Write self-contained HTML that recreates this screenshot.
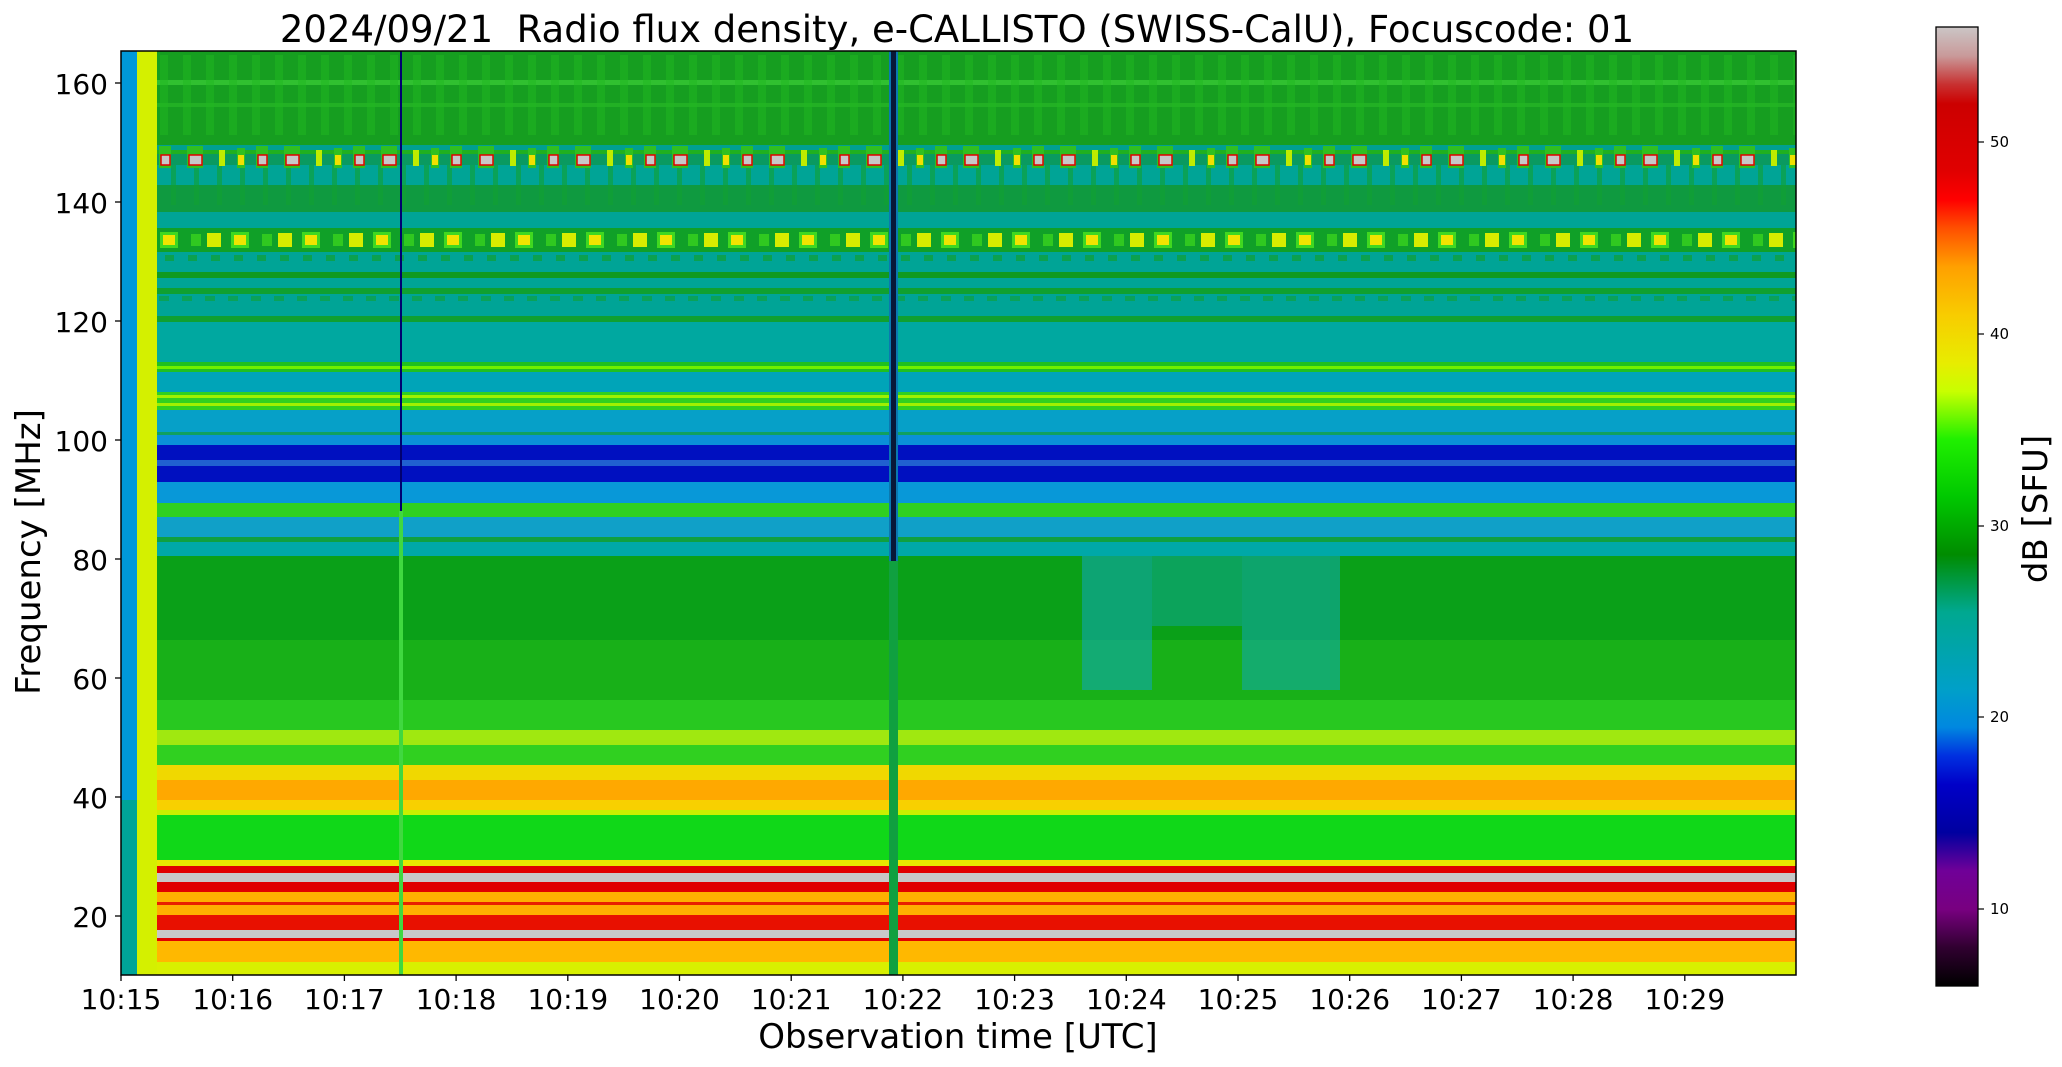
<!DOCTYPE html>
<html><head><meta charset="utf-8"><style>html,body{margin:0;padding:0;background:#fff;}svg{display:block;}</style></head>
<body>
<svg width="2062" height="1067" viewBox="0 0 2062 1067" xmlns="http://www.w3.org/2000/svg" font-family="'DejaVu Sans','Liberation Sans',sans-serif">
<defs>
<linearGradient id="cb" x1="0" y1="27" x2="0" y2="986" gradientUnits="userSpaceOnUse">
<stop offset="0" stop-color="#cbc6c6"/>
<stop offset="0.03" stop-color="#c99a9a"/>
<stop offset="0.06" stop-color="#c83030"/>
<stop offset="0.08" stop-color="#cc0000"/>
<stop offset="0.15" stop-color="#e00000"/>
<stop offset="0.18" stop-color="#ff0000"/>
<stop offset="0.21" stop-color="#ff5000"/>
<stop offset="0.25" stop-color="#ffa000"/>
<stop offset="0.30" stop-color="#f8cc00"/>
<stop offset="0.35" stop-color="#e8ec00"/>
<stop offset="0.38" stop-color="#c8ff00"/>
<stop offset="0.43" stop-color="#20f000"/>
<stop offset="0.49" stop-color="#00c800"/>
<stop offset="0.55" stop-color="#008c00"/>
<stop offset="0.61" stop-color="#00a890"/>
<stop offset="0.69" stop-color="#00a0c8"/>
<stop offset="0.73" stop-color="#0088e0"/>
<stop offset="0.76" stop-color="#0030e0"/>
<stop offset="0.79" stop-color="#0000c8"/>
<stop offset="0.84" stop-color="#0000a0"/>
<stop offset="0.88" stop-color="#700098"/>
<stop offset="0.92" stop-color="#780080"/>
<stop offset="0.96" stop-color="#300030"/>
<stop offset="1" stop-color="#000000"/>
</linearGradient>
<pattern id="rd" x="157" y="0" width="97" height="1067" patternUnits="userSpaceOnUse">
<rect x="2" y="146" width="12" height="22" fill="#30c020"/>
<rect x="4" y="155" width="9" height="10" fill="#c8c8c8" stroke="#e00000" stroke-width="1.5"/>
<rect x="30" y="146" width="16" height="22" fill="#30c020"/>
<rect x="32" y="155" width="13" height="10" fill="#c8c8c8" stroke="#e00000" stroke-width="1.5"/>
<rect x="62" y="150" width="6" height="16" fill="#c0ec00"/>
<rect x="80" y="148" width="8" height="20" fill="#30c020"/>
<rect x="81" y="155" width="6" height="10" fill="#f0e000"/>
</pattern>
<pattern id="yd" x="157" y="0" width="71" height="1067" patternUnits="userSpaceOnUse">
<rect x="3" y="232" width="18" height="16" fill="#40d820"/>
<rect x="6" y="235" width="12" height="10" fill="#f0e400"/>
<rect x="34" y="234" width="10" height="12" fill="#30c820"/>
<rect x="50" y="233" width="14" height="14" fill="#d8ec00"/>
</pattern>
<pattern id="gt" x="157" y="0" width="23" height="1067" patternUnits="userSpaceOnUse">
<rect x="3" y="55" width="8" height="80" fill="#20b820" opacity="0.5"/>
<rect x="14" y="165" width="5" height="40" fill="#10a030" opacity="0.6"/>
<rect x="8" y="255" width="9" height="6" fill="#10a030" opacity="0.7"/>
<rect x="2" y="296" width="10" height="5" fill="#10a030" opacity="0.6"/>
</pattern>
</defs>

<text x="957" y="42" font-size="37" text-anchor="middle" xml:space="preserve" fill="#000">2024/09/21  Radio flux density, e-CALLISTO (SWISS-CalU), Focuscode: 01</text>

<g>
<rect x="157" y="51" width="1639" height="94" fill="#169e20"/>
<rect x="157" y="80" width="1639" height="5" fill="#30c030"/>
<rect x="157" y="103" width="1639" height="4" fill="#22b024"/>
<rect x="157" y="145" width="1639" height="7" fill="#00a090"/>
<rect x="157" y="150" width="1639" height="4" fill="#20b020"/>
<rect x="157" y="154" width="1639" height="11" fill="#0a9a60"/>
<rect x="157" y="165" width="1639" height="20" fill="#00a496"/>
<rect x="157" y="185" width="1639" height="27" fill="#0f9a40"/>
<rect x="157" y="212" width="1639" height="16" fill="#00a496"/>
<rect x="157" y="228" width="1639" height="24" fill="#10a028"/>
<rect x="157" y="252" width="1639" height="20" fill="#00a496"/>
<rect x="157" y="272" width="1639" height="6" fill="#109a20"/>
<rect x="157" y="278" width="1639" height="10" fill="#00a496"/>
<rect x="157" y="288" width="1639" height="6" fill="#10a030"/>
<rect x="157" y="294" width="1639" height="22" fill="#00a496"/>
<rect x="157" y="316" width="1639" height="6" fill="#10a030"/>
<rect x="157" y="322" width="1639" height="40" fill="#00a8a0"/>
<rect x="157" y="362" width="1639" height="10" fill="#20c020"/>
<rect x="157" y="366" width="1639" height="3" fill="#70f000"/>
<rect x="157" y="372" width="1639" height="20" fill="#00a4b8"/>
<rect x="157" y="392" width="1639" height="18" fill="#30d020"/>
<rect x="157" y="395" width="1639" height="3" fill="#a0f000"/>
<rect x="157" y="403" width="1639" height="3" fill="#a0f000"/>
<rect x="157" y="410" width="1639" height="22" fill="#06a0c8"/>
<rect x="157" y="432" width="1639" height="3" fill="#10a060"/>
<rect x="157" y="435" width="1639" height="10" fill="#0a90d8"/>
<rect x="157" y="445" width="1639" height="37" fill="#0010c0"/>
<rect x="157" y="460" width="1639" height="6" fill="#2060d0"/>
<rect x="157" y="482" width="1639" height="21" fill="#0898d8"/>
<rect x="157" y="503" width="1639" height="14" fill="#30d020"/>
<rect x="157" y="517" width="1639" height="20" fill="#10a0c8"/>
<rect x="157" y="537" width="1639" height="5" fill="#10a040"/>
<rect x="157" y="542" width="1639" height="14" fill="#00a8a8"/>
<rect x="157" y="556" width="1639" height="84" fill="#0aa018"/>
<rect x="157" y="640" width="1639" height="60" fill="#18b018"/>
<rect x="157" y="700" width="1639" height="30" fill="#28c820"/>
<rect x="157" y="730" width="1639" height="15" fill="#a0e810"/>
<rect x="157" y="745" width="1639" height="20" fill="#30d020"/>
<rect x="157" y="765" width="1639" height="15" fill="#f0d800"/>
<rect x="157" y="780" width="1639" height="20" fill="#ffa800"/>
<rect x="157" y="800" width="1639" height="10" fill="#f8d000"/>
<rect x="157" y="810" width="1639" height="5" fill="#c8f000"/>
<rect x="157" y="815" width="1639" height="45" fill="#10d818"/>
<rect x="157" y="860" width="1639" height="6" fill="#e8e800"/>
<rect x="157" y="866" width="1639" height="7" fill="#e00000"/>
<rect x="157" y="873" width="1639" height="9" fill="#c8c8c8"/>
<rect x="157" y="882" width="1639" height="10" fill="#e00000"/>
<rect x="157" y="892" width="1639" height="23" fill="#ffb000"/>
<rect x="157" y="902" width="1639" height="3" fill="#e82000"/>
<rect x="157" y="915" width="1639" height="15" fill="#e81000"/>
<rect x="157" y="930" width="1639" height="8" fill="#c8c8c8"/>
<rect x="157" y="938" width="1639" height="3" fill="#e00000"/>
<rect x="157" y="941" width="1639" height="21" fill="#ffb800"/>
<rect x="157" y="962" width="1639" height="13" fill="#d8f000"/>
<rect x="157" y="51" width="1639" height="924" fill="url(#gt)"/>
<rect x="157" y="145" width="1639" height="30" fill="url(#rd)"/>
<rect x="157" y="228" width="1639" height="24" fill="url(#yd)"/>
</g>
<rect x="1082" y="556" width="70" height="134" fill="#10a8c0" opacity="0.55"/>
<rect x="1152" y="556" width="90" height="70" fill="#10a8c0" opacity="0.4"/>
<rect x="1242" y="556" width="98" height="134" fill="#10a8c0" opacity="0.5"/>
<rect x="121" y="51" width="16" height="750" fill="#0098d8"/>
<rect x="121" y="800" width="16" height="175" fill="#00a498"/>
<rect x="137" y="51" width="20" height="924" fill="#d4f000"/>
<rect x="400" y="51" width="2" height="460" fill="#000070"/>
<rect x="399" y="511" width="4" height="464" fill="#40d840"/>
<rect x="889" y="51" width="9" height="510" fill="#0a78b0"/>
<rect x="891" y="51" width="5" height="510" fill="#081838"/>
<rect x="889" y="561" width="9" height="414" fill="#10a040"/>
<rect x="121" y="51" width="1675" height="924" fill="none" stroke="#000" stroke-width="1.5"/>

<g stroke="#000" stroke-width="1.3">
<line x1="115" y1="83" x2="121" y2="83"/><line x1="115" y1="202" x2="121" y2="202"/>
<line x1="115" y1="321" x2="121" y2="321"/><line x1="115" y1="440" x2="121" y2="440"/>
<line x1="115" y1="559" x2="121" y2="559"/><line x1="115" y1="678" x2="121" y2="678"/>
<line x1="115" y1="797" x2="121" y2="797"/><line x1="115" y1="916" x2="121" y2="916"/>
</g>
<g font-size="28" text-anchor="end" fill="#000">
<text x="108" y="94">160</text><text x="108" y="213">140</text><text x="108" y="332">120</text>
<text x="108" y="451">100</text><text x="108" y="570">80</text><text x="108" y="689">60</text>
<text x="108" y="808">40</text><text x="108" y="927">20</text>
</g>
<g stroke="#000" stroke-width="1.3">
<line x1="121" y1="975" x2="121" y2="981"/><line x1="232.7" y1="975" x2="232.7" y2="981"/>
<line x1="344.4" y1="975" x2="344.4" y2="981"/><line x1="456.1" y1="975" x2="456.1" y2="981"/>
<line x1="567.8" y1="975" x2="567.8" y2="981"/><line x1="679.5" y1="975" x2="679.5" y2="981"/>
<line x1="791.2" y1="975" x2="791.2" y2="981"/><line x1="902.9" y1="975" x2="902.9" y2="981"/>
<line x1="1014.6" y1="975" x2="1014.6" y2="981"/><line x1="1126.3" y1="975" x2="1126.3" y2="981"/>
<line x1="1238" y1="975" x2="1238" y2="981"/><line x1="1349.7" y1="975" x2="1349.7" y2="981"/>
<line x1="1461.4" y1="975" x2="1461.4" y2="981"/><line x1="1573.1" y1="975" x2="1573.1" y2="981"/>
<line x1="1684.8" y1="975" x2="1684.8" y2="981"/>
</g>
<g font-size="28" text-anchor="middle" fill="#000">
<text x="121" y="1009">10:15</text><text x="232.7" y="1009">10:16</text><text x="344.4" y="1009">10:17</text>
<text x="456.1" y="1009">10:18</text><text x="567.8" y="1009">10:19</text><text x="679.5" y="1009">10:20</text>
<text x="791.2" y="1009">10:21</text><text x="902.9" y="1009">10:22</text><text x="1014.6" y="1009">10:23</text>
<text x="1126.3" y="1009">10:24</text><text x="1238" y="1009">10:25</text><text x="1349.7" y="1009">10:26</text>
<text x="1461.4" y="1009">10:27</text><text x="1573.1" y="1009">10:28</text><text x="1684.8" y="1009">10:29</text>
</g>
<text x="958" y="1048" font-size="34" text-anchor="middle" fill="#000">Observation time [UTC]</text>
<text transform="translate(40,552) rotate(-90)" font-size="34" text-anchor="middle" fill="#000">Frequency [MHz]</text>

<rect x="1936" y="27" width="42" height="959" fill="url(#cb)" stroke="#000" stroke-width="1.3"/>
<g stroke="#000" stroke-width="1.2">
<line x1="1978" y1="142" x2="1984" y2="142"/><line x1="1978" y1="334" x2="1984" y2="334"/>
<line x1="1978" y1="526" x2="1984" y2="526"/><line x1="1978" y1="717" x2="1984" y2="717"/>
<line x1="1978" y1="909" x2="1984" y2="909"/>
</g>
<g font-size="15" fill="#000">
<text x="1990" y="147">50</text><text x="1990" y="339">40</text><text x="1990" y="531">30</text>
<text x="1990" y="722">20</text><text x="1990" y="914">10</text>
</g>
<text transform="translate(2047,509) rotate(-90)" font-size="34" text-anchor="middle" fill="#000">dB [SFU]</text>
</svg>
</body></html>
